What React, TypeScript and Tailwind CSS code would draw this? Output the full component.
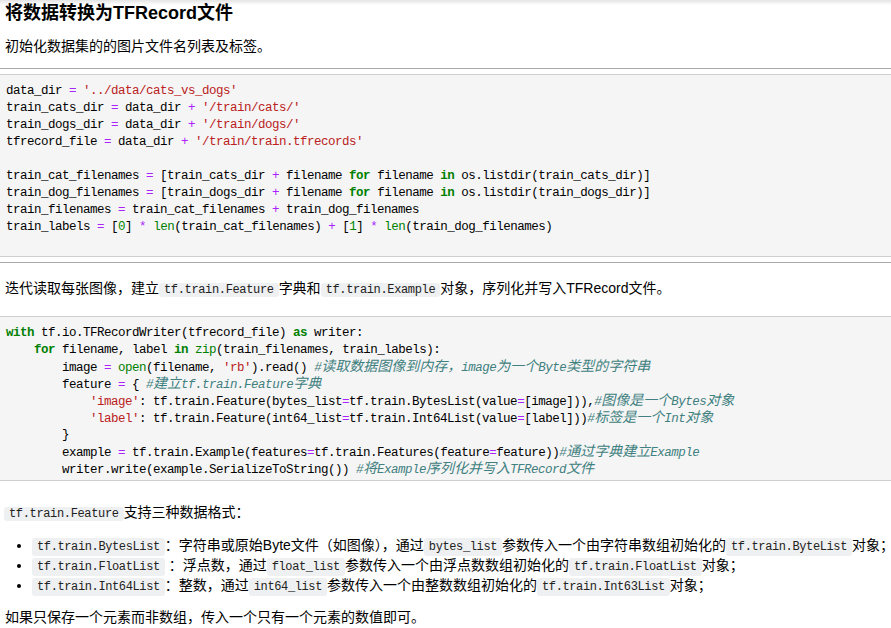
import React from "react";

const CJK = /([\u3000-\u303f\u4e00-\u9fff\uff00-\uffef]+)/;

function C({ t }: { t: string }) {
  const parts = t.split(CJK);
  return (
    <span className="text-[#408080] italic">
      {parts.map((p, i) =>
        i % 2 === 1 ? (
          <span key={i} className="text-[14px] tracking-normal">
            {p}
          </span>
        ) : (
          <React.Fragment key={i}>{p}</React.Fragment>
        )
      )}
    </span>
  );
}
const K = ({ t }: { t: string }) => <span className="text-[#008000] font-bold">{t}</span>;
const B = ({ t }: { t: string }) => <span className="text-[#008000]">{t}</span>;
const S = ({ t }: { t: string }) => <span className="text-[#ba2121]">{t}</span>;
const O = ({ t }: { t: string }) => <span className="text-[#aa22ff]">{t}</span>;
const N = ({ t }: { t: string }) => <span className="text-[#008800]">{t}</span>;

function L({ children }: { children?: React.ReactNode }) {
  return <div className="h-[17px] leading-[17px] whitespace-pre">{children ?? " "}</div>;
}

function IC({ children, list }: { children: React.ReactNode; list?: boolean }) {
  return (
    <code
      className={
        list
          ? "font-['Liberation_Mono',monospace] text-[12px] leading-none tracking-[-0.38px] bg-[#eff0f1] text-[#222] rounded-[3px] px-[5px] py-[2px]"
          : "font-['Liberation_Mono',monospace] text-[12px] leading-none tracking-[-0.35px] bg-[#eff0f1] text-[#222] rounded-[3px] px-[5px] py-0"
      }
    >
      {children}
    </code>
  );
}

export default function App() {
  return (
    <div className="relative w-[891px] h-[628px] overflow-hidden bg-white text-black font-['Liberation_Sans','Noto_Sans_CJK_SC',sans-serif]">
      <div className="absolute left-0 top-0 w-full h-[5px] bg-gradient-to-b from-[#e4e4e4] to-white" />
      <div className="relative pl-[5px]">
        <h3 className="pt-[2px] text-[18px] leading-[22px] font-bold">将数据转换为TFRecord文件</h3>
        <p className="mt-[12px] text-[14px] leading-[20px]">初始化数据集的的图片文件名列表及标签。</p>
      </div>
      <div className="mt-[12px] h-px bg-[#a9a9a9]" />
      <div className="mt-[5px] border-y border-[#cfcfcf] bg-[#f5f5f5] pl-[6px] pt-[8px] pb-[3px] font-['Liberation_Mono','Noto_Sans_CJK_SC',monospace] text-[12.5px] tracking-[-0.5px] text-black">
        <L>
          data_dir <O t="=" /> <S t="'../data/cats_vs_dogs'" />
        </L>
        <L>
          train_cats_dir <O t="=" /> data_dir <O t="+" /> <S t="'/train/cats/'" />
        </L>
        <L>
          train_dogs_dir <O t="=" /> data_dir <O t="+" /> <S t="'/train/dogs/'" />
        </L>
        <L>
          tfrecord_file <O t="=" /> data_dir <O t="+" /> <S t="'/train/train.tfrecords'" />
        </L>
        <L />
        <L>
          train_cat_filenames <O t="=" /> [train_cats_dir <O t="+" /> filename <K t="for" /> filename <K t="in" /> os.listdir(train_cats_dir)]
        </L>
        <L>
          train_dog_filenames <O t="=" /> [train_dogs_dir <O t="+" /> filename <K t="for" /> filename <K t="in" /> os.listdir(train_dogs_dir)]
        </L>
        <L>
          train_filenames <O t="=" /> train_cat_filenames <O t="+" /> train_dog_filenames
        </L>
        <L>
          train_labels <O t="=" /> [<N t="0" />] <O t="*" /> <B t="len" />(train_cat_filenames) <O t="+" /> [<N t="1" />] <O t="*" /> <B t="len" />(train_dog_filenames)
        </L>
        <L />
      </div>
      <div className="mt-[5px] h-px bg-[#a9a9a9]" />
      <p className="mt-[15px] pl-[5px] text-[14px] leading-[20px] whitespace-nowrap">
        迭代读取每张图像，建立<IC>tf.train.Feature</IC>字典和<IC>tf.train.Example</IC>对象，序列化并写入TFRecord文件。
      </p>
      <div className="mt-[18px] border-y border-[#cfcfcf] bg-[#f5f5f5] pl-[6px] pt-[8px] pb-[2px] font-['Liberation_Mono','Noto_Sans_CJK_SC',monospace] text-[12.5px] tracking-[-0.5px] text-black">
        <L>
          <K t="with" /> tf.io.TFRecordWriter(tfrecord_file) <K t="as" /> writer:
        </L>
        <L>
          {"    "}
          <K t="for" /> filename, label <K t="in" /> <B t="zip" />(train_filenames, train_labels):
        </L>
        <L>
          {"        "}image <O t="=" /> <B t="open" />(filename, <S t="'rb'" />).read() <C t="#读取数据图像到内存，image为一个Byte类型的字符串" />
        </L>
        <L>
          {"        "}feature <O t="=" /> {"{"} <C t="#建立tf.train.Feature字典" />
        </L>
        <L>
          {"            "}
          <S t="'image'" />: tf.train.Feature(bytes_list<O t="=" />tf.train.BytesList(value<O t="=" />[image])),<C t="#图像是一个Bytes对象" />
        </L>
        <L>
          {"            "}
          <S t="'label'" />: tf.train.Feature(int64_list<O t="=" />tf.train.Int64List(value<O t="=" />[label]))<C t="#标签是一个Int对象" />
        </L>
        <L>{"        }"}</L>
        <L>
          {"        "}example <O t="=" /> tf.train.Example(features<O t="=" />tf.train.Features(feature<O t="=" />feature))<C t="#通过字典建立Example" />
        </L>
        <L>
          {"        "}writer.write(example.SerializeToString()) <C t="#将Example序列化并写入TFRecord文件" />
        </L>
      </div>
      <div className="pl-[4px] text-[14px] leading-[20px] whitespace-nowrap">
        <p className="mt-[21px]">
          <IC>tf.train.Feature</IC>支持三种数据格式：
        </p>
        <ul className="mt-[13px] list-disc pl-[28px]">
          <li className="h-[20px]">
            <IC list>tf.train.BytesList</IC>：字符串或原始Byte文件（如图像），通过<IC list>bytes_list</IC>参数传入一个由字符串数组初始化的<IC list>tf.train.ByteList</IC>对象；
          </li>
          <li className="h-[20px]">
            <IC list>tf.train.FloatList</IC> ：浮点数，通过<IC list>float_list</IC>参数传入一个由浮点数数组初始化的<IC list>tf.train.FloatList</IC>对象；
          </li>
          <li className="h-[20px]">
            <IC list>tf.train.Int64List</IC>：整数，通过<IC list>int64_list</IC>参数传入一个由整数数组初始化的<IC list>tf.train.Int63List</IC>对象；
          </li>
        </ul>
        <p className="mt-[12px] pl-[1px]">如果只保存一个元素而非数组，传入一个只有一个元素的数值即可。</p>
      </div>
    </div>
  );
}
